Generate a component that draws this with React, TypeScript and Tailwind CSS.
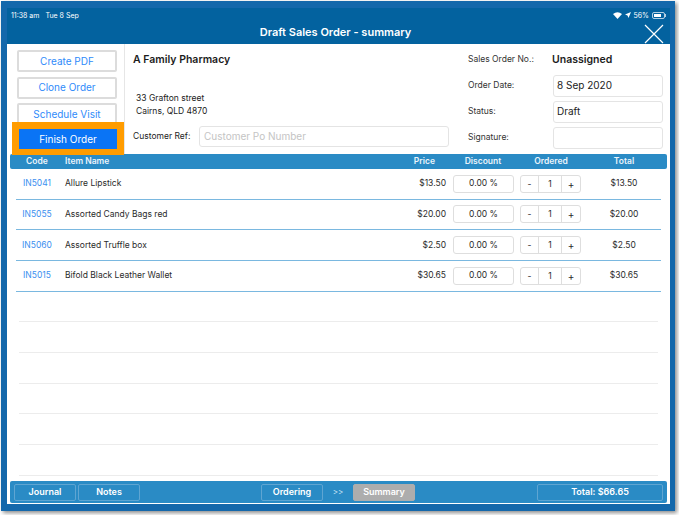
import React from 'react'

const items = [
  { code: 'IN5041', name: 'Allure Lipstick', price: '$13.50', total: '$13.50' },
  { code: 'IN5055', name: 'Assorted Candy Bags red', price: '$20.00', total: '$20.00' },
  { code: 'IN5060', name: 'Assorted Truffle box', price: '$2.50', total: '$2.50' },
  { code: 'IN5015', name: 'Bifold Black Leather Wallet', price: '$30.65', total: '$30.65' },
]

const emptyRows = [0, 1, 2, 3, 4, 5]

function StatusIcons() {
  return (
    <div className="flex items-center gap-[3px]">
      <svg width="9" height="7" viewBox="0 0 18 14" fill="#fff">
        <path d="M9 14 L0 4 Q9 -3 18 4 Z" />
      </svg>
      <svg width="6" height="6" viewBox="0 0 12 12" fill="#fff">
        <path d="M12 0 L0 5 L5 7 L7 12 Z" />
      </svg>
      <span className="text-[7px] leading-none text-white">56%</span>
      <div className="flex items-center">
        <div className="flex h-[7px] w-[13px] items-center rounded-[2px] border border-white/70 p-px">
          <div className="h-full w-[7px] bg-white" />
        </div>
        <div className="h-[3px] w-px bg-white/70" />
      </div>
    </div>
  )
}

function ActionButton({ label }: { label: string }) {
  return (
    <button className="h-[22px] w-full rounded-[2px] border-2 border-[#dcdcdc] bg-white text-[10px] text-[#2f8bfa]">
      {label}
    </button>
  )
}

function FooterButton({ label, className }: { label: string; className: string }) {
  return (
    <div className={`flex h-[17px] items-center justify-center rounded-[2px] border text-[9px] font-semibold text-white ${className}`}>
      {label}
    </div>
  )
}

export default function App() {
  return (
    <div className="h-[515px] w-[679px] overflow-hidden bg-white pl-px pt-px font-['Inter',sans-serif]">
      <div className="h-[510px] w-[674px] bg-[#1468ab] pb-[7px] pl-[6px] pr-[5px] pt-[7px] shadow-[2px_2px_4px_rgba(0,0,0,0.45)]">
        <div className="flex h-full flex-col bg-white">
          {/* Header */}
          <div className="h-[36px] shrink-0 bg-[#03629f] text-white">
            <div className="flex h-[12px] items-center justify-between pl-[4px] pr-[4px] pt-[2px]">
              <div className="flex gap-[6px] text-[7px] leading-none">
                <span>11:38 am</span>
                <span>Tue 8 Sep</span>
              </div>
              <StatusIcons />
            </div>
            <div className="flex h-[24px] items-center pr-[6px]">
              <div className="flex-1 pl-[20px] text-center text-[11px] font-semibold">Draft Sales Order - summary</div>
              <svg width="20" height="20" viewBox="0 0 20 20" stroke="#fff" strokeWidth="1.2" className="mb-[-4px]">
                <path d="M1 1 L19 19 M19 1 L1 19" />
              </svg>
            </div>
          </div>

          {/* Order details */}
          <div className="flex h-[110px] shrink-0">
            <div className="relative w-[118px] shrink-0 border-r border-[#e6e6e6] pl-[10px] pr-[7px] pt-[6px]">
              <div className="flex flex-col gap-[4.5px]">
                <ActionButton label="Create PDF" />
                <ActionButton label="Clone Order" />
                <ActionButton label="Schedule Visit" />
              </div>
              <div className="absolute left-[5px] top-[78px] h-[33px] w-[112px] border-x-[7px] border-b-[6px] border-t-[7px] border-[#ff9c00] bg-[#0a74f5]">
                <div className="flex h-full items-center justify-center text-[10px] text-white">Finish Order</div>
              </div>
            </div>

            <div className="flex flex-1 flex-col pl-[8px] pt-[9px] text-[#1c1c1c]">
              <div className="text-[10.5px] font-semibold leading-[14px]">A Family Pharmacy</div>
              <div className="mt-[25px] pl-[3px] text-[8.5px] leading-[12.5px]">
                <div>33 Grafton street</div>
                <div>Cairns, QLD 4870</div>
              </div>
              <div className="mt-[9px] flex items-center">
                <span className="w-[66px] shrink-0 text-[8.5px]">Customer Ref:</span>
                <div className="flex h-[21px] w-[250px] items-center rounded-[3px] border border-[#e4e4e4] pl-[4px] text-[10px] text-[#c4c4c4]">
                  Customer Po Number
                </div>
              </div>
            </div>

            <div className="w-[202px] shrink-0 pr-[7px] pt-[6px] text-[8.5px] text-[#333]">
              <div className="flex h-[19px] items-center">
                <span className="w-[84px]">Sales Order No.:</span>
                <span className="text-[10.5px] font-semibold text-[#1c1c1c]">Unassigned</span>
              </div>
              <div className="mt-[6px] flex flex-col gap-[4.5px]">
                <div className="flex items-center">
                  <span className="w-[85px]">Order Date:</span>
                  <div className="flex h-[21.5px] flex-1 items-center rounded-[3px] border border-[#e4e4e4] pl-[3px] text-[10px] text-[#222]">8 Sep 2020</div>
                </div>
                <div className="flex items-center">
                  <span className="w-[85px]">Status:</span>
                  <div className="flex h-[21.5px] flex-1 items-center rounded-[3px] border border-[#e4e4e4] pl-[3px] text-[10px] text-[#222]">Draft</div>
                </div>
                <div className="flex items-center">
                  <span className="w-[85px]">Signature:</span>
                  <div className="h-[21.5px] flex-1 rounded-[3px] border border-[#e4e4e4]" />
                </div>
              </div>
            </div>
          </div>

          {/* Table head */}
          <div className="mx-[3px] flex h-[15px] shrink-0 items-center rounded-[2px] bg-[#2a8bc5] text-[8.5px] font-semibold text-[#eaf4fb]">
            <div className="w-[54px] text-center">Code</div>
            <div className="ml-px flex-1">Item Name</div>
            <div className="mr-[10px]">Price</div>
            <div className="w-[76px] text-center">Discount</div>
            <div className="w-[60px] text-center">Ordered</div>
            <div className="w-[86px] text-center">Total</div>
          </div>

          {/* Rows */}
          <div className="shrink-0">
            {items.map((item) => (
              <div key={item.code} className="mx-[9px] flex h-[30.67px] items-center border-b border-[#7ab8e0] text-[8.5px] text-[#2b2b2b]">
                <div className="w-[42px] text-center text-[#3b8ff0]">{item.code}</div>
                <div className="ml-[7px] flex-1">{item.name}</div>
                <div className="mr-[7px]">{item.price}</div>
                <div className="flex h-[18px] w-[61px] items-center justify-center rounded-[3px] border border-[#dedede]">0.00 %</div>
                <div className="ml-[6px] flex h-[18px] w-[61px] items-center rounded-[3px] border border-[#dedede] text-center">
                  <div className="w-[18px] border-r border-[#dedede] leading-[16px]">-</div>
                  <div className="flex-1 border-r border-[#dedede] leading-[16px]">1</div>
                  <div className="w-[18px] text-[10px] leading-[16px]">+</div>
                </div>
                <div className="w-[80px] pl-[6px] text-center">{item.total}</div>
              </div>
            ))}
            {emptyRows.map((row) => (
              <div key={row} className="mx-[12px] h-[30.67px] border-b border-[#ececec]" />
            ))}
          </div>

          {/* Footer bar */}
          <div className="mx-[3px] mb-px mt-auto flex h-[22px] shrink-0 items-center rounded-[2px] bg-[#2a8bc5] px-[4px]">
            <FooterButton label="Journal" className="w-[62px] border-[#5fa5d2]" />
            <FooterButton label="Notes" className="ml-[2px] w-[62px] border-[#5fa5d2]" />
            <FooterButton label="Ordering" className="ml-[121px] w-[62px] border-[#5fa5d2]" />
            <div className="w-[30px] text-center text-[8px] text-[#d5e8f5]">&gt;&gt;</div>
            <FooterButton label="Summary" className="w-[62px] border-[#adadad] bg-[#adadad]" />
            <FooterButton label="Total: $66.65" className="ml-auto w-[126px] border-[#5fa5d2]" />
          </div>
        </div>
      </div>
    </div>
  )
}
